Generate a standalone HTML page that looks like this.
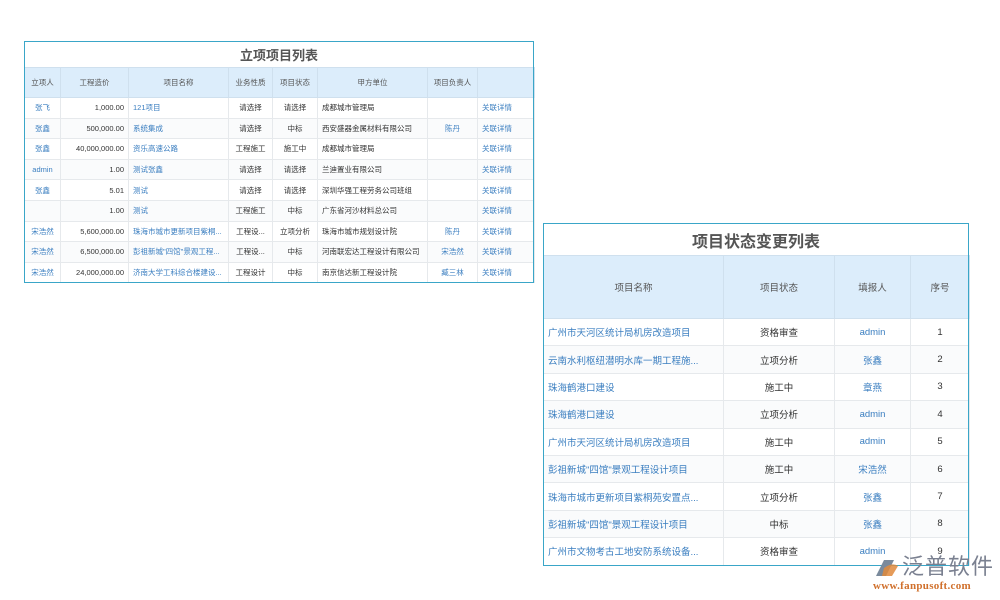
<!DOCTYPE html>
<html><head><meta charset="utf-8"><style>
body{margin:0;width:1000px;height:600px;background:#fff;position:relative;overflow:hidden;font-family:"Liberation Sans","Noto Sans CJK SC",sans-serif;}
table{border-collapse:collapse;table-layout:fixed;position:absolute;background:#fff}
td,th{border:1px solid #e6e9ec;white-space:nowrap;overflow:hidden;font-weight:normal;padding:0 4px;color:#333}
th{background:#dcedfb;color:#555;border-color:#cfe0ee}
tr:nth-child(odd) td{background:#fafbfc}
.a{color:#3a7ec0}
.box{position:absolute;border:1px solid #3aa6c8;box-sizing:border-box;z-index:5}
.t1 td,.t1 th{font-size:7.5px;height:19.6px;text-align:center}
.t1 th{height:29px}
.t2 td,.t2 th{font-size:9.5px;height:26.4px;text-align:center}
.t2 th{height:62px}
.l{text-align:left!important}.r{text-align:right!important}
.title{position:absolute;text-align:center;font-weight:bold;color:#555}
</style></head><body>
<div class="box" style="left:24px;top:41px;width:510px;height:242px"></div>
<div class="title" style="left:24px;top:45px;width:510px;font-size:13px">立项项目列表</div>
<table class="t1" style="left:24px;top:67px;width:510px">
<colgroup><col style="width:36px"><col style="width:68px"><col style="width:100px"><col style="width:44px"><col style="width:45px"><col style="width:110px"><col style="width:50px"><col style="width:57px"></colgroup>
<tr><th>立项人</th><th>工程造价</th><th>项目名称</th><th>业务性质</th><th>项目状态</th><th>甲方单位</th><th>项目负责人</th><th></th></tr>
<tr><td class="a">张飞</td><td class="r">1,000.00</td><td class="l a">121项目</td><td>请选择</td><td>请选择</td><td class="l">成都城市管理局</td><td></td><td class="l a">关联详情</td></tr>
<tr><td class="a">张鑫</td><td class="r">500,000.00</td><td class="l a">系统集成</td><td>请选择</td><td>中标</td><td class="l">西安盛器金属材料有限公司</td><td class="a">陈丹</td><td class="l a">关联详情</td></tr>
<tr><td class="a">张鑫</td><td class="r">40,000,000.00</td><td class="l a">资乐高速公路</td><td>工程施工</td><td>施工中</td><td class="l">成都城市管理局</td><td></td><td class="l a">关联详情</td></tr>
<tr><td class="a">admin</td><td class="r">1.00</td><td class="l a">测试张鑫</td><td>请选择</td><td>请选择</td><td class="l">兰迪置业有限公司</td><td></td><td class="l a">关联详情</td></tr>
<tr><td class="a">张鑫</td><td class="r">5.01</td><td class="l a">测试</td><td>请选择</td><td>请选择</td><td class="l">深圳华强工程劳务公司班组</td><td></td><td class="l a">关联详情</td></tr>
<tr><td></td><td class="r">1.00</td><td class="l a">测试</td><td>工程施工</td><td>中标</td><td class="l">广东省河沙材料总公司</td><td></td><td class="l a">关联详情</td></tr>
<tr><td class="a">宋浩然</td><td class="r">5,600,000.00</td><td class="l a">珠海市城市更新项目紫桐...</td><td>工程设...</td><td>立项分析</td><td class="l">珠海市城市规划设计院</td><td class="a">陈丹</td><td class="l a">关联详情</td></tr>
<tr><td class="a">宋浩然</td><td class="r">6,500,000.00</td><td class="l a">彭祖新城"四馆"景观工程...</td><td>工程设...</td><td>中标</td><td class="l">河南联宏达工程设计有限公司</td><td class="a">宋浩然</td><td class="l a">关联详情</td></tr>
<tr><td class="a">宋浩然</td><td class="r">24,000,000.00</td><td class="l a">济南大学工科综合楼建设...</td><td>工程设计</td><td>中标</td><td class="l">南京信达新工程设计院</td><td class="a">臧三林</td><td class="l a">关联详情</td></tr>
</table>

<div class="box" style="left:543px;top:223px;width:426px;height:343px"></div>
<div class="title" style="left:543px;top:228px;width:426px;font-size:16px">项目状态变更列表</div>
<table class="t2" style="left:543px;top:255px;width:426px">
<colgroup><col style="width:180px"><col style="width:111px"><col style="width:76px"><col style="width:59px"></colgroup>
<tr><th>项目名称</th><th>项目状态</th><th>填报人</th><th>序号</th></tr>
<tr><td class="l a">广州市天河区统计局机房改造项目</td><td>资格审查</td><td class="a">admin</td><td>1</td></tr>
<tr><td class="l a">云南水利枢纽潜明水库一期工程施...</td><td>立项分析</td><td class="a">张鑫</td><td>2</td></tr>
<tr><td class="l a">珠海鹤港口建设</td><td>施工中</td><td class="a">章燕</td><td>3</td></tr>
<tr><td class="l a">珠海鹤港口建设</td><td>立项分析</td><td class="a">admin</td><td>4</td></tr>
<tr><td class="l a">广州市天河区统计局机房改造项目</td><td>施工中</td><td class="a">admin</td><td>5</td></tr>
<tr><td class="l a">彭祖新城"四馆"景观工程设计项目</td><td>施工中</td><td class="a">宋浩然</td><td>6</td></tr>
<tr><td class="l a">珠海市城市更新项目紫桐苑安置点...</td><td>立项分析</td><td class="a">张鑫</td><td>7</td></tr>
<tr><td class="l a">彭祖新城"四馆"景观工程设计项目</td><td>中标</td><td class="a">张鑫</td><td>8</td></tr>
<tr><td class="l a">广州市文物考古工地安防系统设备...</td><td>资格审查</td><td class="a">admin</td><td>9</td></tr>
</table>

<svg style="position:absolute;left:872px;top:556px;z-index:6" width="28" height="24" viewBox="0 0 28 24">
<path d="M4 20 L12 4 L22 4 L14 20 Z" fill="#7a8a9c"/><path d="M12 12 Q20 6 26 10 L20 20 L10 20 Z" fill="#e08a3c" opacity="0.85"/></svg>
<div style="position:absolute;z-index:6;left:902px;top:551px;font-size:22px;color:#7a8090;letter-spacing:1px;font-family:'Noto Sans CJK SC',sans-serif;line-height:28px">泛普软件</div>
<div style="position:absolute;z-index:6;left:873px;top:580px;font-size:11px;color:#d0702c;font-family:'Liberation Serif',serif;font-weight:bold;letter-spacing:0.3px">www.fanpusoft.com</div>
</body></html>
